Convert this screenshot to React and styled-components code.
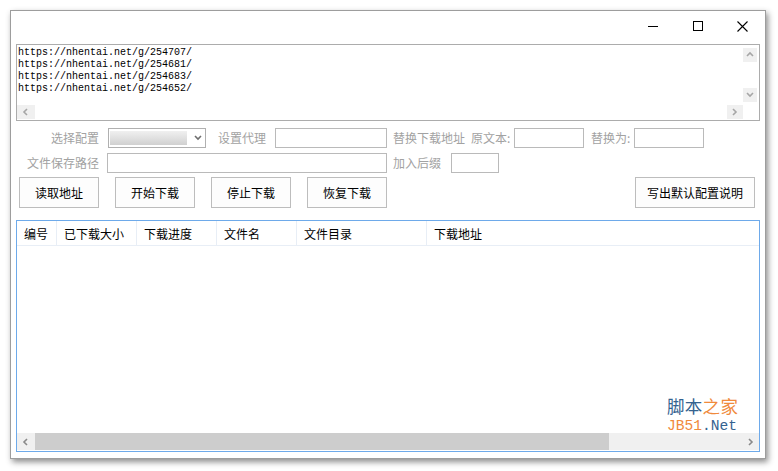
import React from 'react';
import styled, { createGlobalStyle } from 'styled-components';

const GlobalStyle = createGlobalStyle`
  html, body {
    margin: 0;
    padding: 0;
    background: #ffffff;
  }
  body {
    width: 778px;
    height: 471px;
    overflow: hidden;
    font-family: "Noto Sans CJK SC", "Noto Sans", sans-serif;
  }
`;

const Page = styled.div`
  box-sizing: border-box;
  width: 778px;
  height: 471px;
  padding: 10px 0 0 10px;
`;

const Window = styled.div`
  box-sizing: border-box;
  width: 756px;
  height: 449px;
  border: 1px solid #9d9d9d;
  background: #ffffff;
  display: flex;
  flex-direction: column;
  box-shadow: 2px 3px 6px rgba(0, 0, 0, 0.45);
`;

const TitleBar = styled.div`
  height: 33px;
  display: flex;
  justify-content: flex-end;
  align-items: flex-start;
`;

const CaptionButton = styled.div`
  width: 45px;
  height: 30px;
  display: flex;
  align-items: center;
  justify-content: center;
`;

const Content = styled.div`
  flex: 1;
  display: flex;
  flex-direction: column;
  padding: 0 5px 6px 5px;
  min-height: 0;
`;

const UrlBox = styled.div`
  box-sizing: border-box;
  height: 77px;
  border: 1px solid #acacac;
  display: grid;
  grid-template-columns: 1fr 16px;
  grid-template-rows: 1fr 16px;
`;

const UrlText = styled.div`
  padding: 2px 0 0 1px;
  font-family: "Liberation Mono", "DejaVu Sans Mono", monospace;
  font-size: 10px;
  line-height: 12px;
  color: #000;
  white-space: pre;
`;

const VScroll = styled.div`
  display: flex;
  flex-direction: column;
  justify-content: space-between;
  align-items: flex-start;
  padding: 3px 0 2px 0;
`;

const HScrollSmall = styled.div`
  display: flex;
  justify-content: space-between;
  align-items: flex-start;
  padding: 1px 0 0 0;
`;

const ScrollBtn = styled.div`
  width: ${(p) => p.$w}px;
  height: ${(p) => p.$h}px;
  background: #f0f0f0;
  display: flex;
  align-items: center;
  justify-content: center;
`;

const FormRow = styled.div`
  display: flex;
  align-items: center;
  height: ${(p) => p.$h || 20}px;
  margin-top: ${(p) => p.$mt}px;
`;

const Label = styled.span`
  flex: none;
  width: ${(p) => (p.$w ? `${p.$w}px` : 'auto')};
  margin-left: ${(p) => p.$ml || 0}px;
  text-align: ${(p) => p.$align || 'left'};
  font-size: 12px;
  line-height: 20px;
  color: #a2a2a2;
  white-space: nowrap;
`;

const TextBox = styled.input`
  flex: none;
  box-sizing: border-box;
  width: ${(p) => p.$w}px;
  height: 20px;
  margin: 0 0 0 ${(p) => p.$ml || 0}px;
  padding: 0 3px;
  border: 1px solid #bababa;
  background: #fff;
  outline: none;
  font-size: 12px;
`;

const Select = styled.div`
  flex: none;
  box-sizing: border-box;
  width: 98px;
  height: 20px;
  margin-left: 9px;
  border: 1px solid #b0b0b0;
  display: flex;
  align-items: center;
  padding-left: 1px;
`;

const SelectValue = styled.div`
  width: 77px;
  height: 14px;
  background: linear-gradient(#f0f0f0, #e2e2e2 45%, #d0d0d0);
`;

const SelectArrow = styled.div`
  flex: 1;
  display: flex;
  justify-content: center;
  padding-left: 3px;
`;

const Button = styled.button`
  flex: none;
  box-sizing: border-box;
  width: ${(p) => p.$w || 80}px;
  height: 31px;
  margin: 0 ${(p) => p.$mr || 0}px 0 ${(p) => (p.$auto ? 'auto' : `${p.$ml || 0}px`)};
  padding: 0;
  border: 1px solid #bdbdbd;
  background: #fdfdfd;
  font-family: "Noto Sans CJK SC", sans-serif;
  font-size: 12px;
  color: #000;
`;

const ListView = styled.div`
  position: relative;
  flex: 1;
  margin-top: 12px;
  border: 1px solid #6eaaea;
  display: flex;
  flex-direction: column;
`;

const Header = styled.div`
  display: flex;
  height: 24px;
  border-bottom: 1px solid #e8eef6;
`;

const HeaderCell = styled.div`
  box-sizing: border-box;
  flex: ${(p) => (p.$w ? 'none' : 1)};
  width: ${(p) => (p.$w ? `${p.$w}px` : 'auto')};
  padding-left: 7px;
  border-right: ${(p) => (p.$w ? '1px solid #e8eef6' : 'none')};
  font-size: 12px;
  line-height: 25px;
  color: #000;
`;

const ListBody = styled.div`
  flex: 1;
`;

const HScroll = styled.div`
  display: flex;
  height: 17px;
  margin-bottom: 1px;
  background: #f0f0f0;
`;

const Thumb = styled.div`
  width: 574px;
  background: #cdcdcd;
`;

const Track = styled.div`
  flex: 1;
  display: flex;
  justify-content: flex-end;
`;

const Watermark = styled.div`
  position: absolute;
  left: 650px;
  top: 175px;
  display: flex;
  flex-direction: column;
`;

const MarkCn = styled.div`
  font-size: 17.5px;
  line-height: 20px;
  letter-spacing: 0.3px;
`;

const MarkEn = styled.div`
  font-family: "Liberation Mono", "DejaVu Sans Mono", monospace;
  font-size: 14.6px;
  line-height: 16px;
  margin-top: 2px;
`;

const Tone = styled.span`
  color: ${(p) => (p.$orange ? '#f08a3c' : '#34628f')};
`;

const Chevron = ({ dir, color = '#a6a6a6' }) => {
  const pts = {
    up: '1,5 4,2 7,5',
    down: '1,2 4,5 7,2',
    left: '5,1 2,4 5,7',
    right: '2,1 5,4 2,7',
  }[dir];
  return (
    <svg width="8" height="8" viewBox="0 0 8 8">
      <polyline points={pts} fill="none" stroke={color} strokeWidth="1.6" />
    </svg>
  );
};

const urls = [
  'https://nhentai.net/g/254707/',
  'https://nhentai.net/g/254681/',
  'https://nhentai.net/g/254683/',
  'https://nhentai.net/g/254652/',
];

const columns = [
  { name: '编号', w: 40 },
  { name: '已下载大小', w: 80 },
  { name: '下载进度', w: 80 },
  { name: '文件名', w: 80 },
  { name: '文件目录', w: 130 },
  { name: '下载地址' },
];

export default function App() {
  return (
    <Page>
      <GlobalStyle />
      <Window>
        <TitleBar>
          <CaptionButton>
            <svg width="10" height="10" viewBox="0 0 10 10">
              <line x1="0" y1="5.5" x2="10" y2="5.5" stroke="#000" strokeWidth="1" />
            </svg>
          </CaptionButton>
          <CaptionButton>
            <svg width="10" height="10" viewBox="0 0 10 10">
              <rect x="0.5" y="0.5" width="9" height="9" fill="none" stroke="#000" strokeWidth="1" />
            </svg>
          </CaptionButton>
          <CaptionButton>
            <svg width="11" height="11" viewBox="0 0 11 11">
              <path d="M0.5 0.5 L10.5 10.5 M10.5 0.5 L0.5 10.5" stroke="#000" strokeWidth="1.1" />
            </svg>
          </CaptionButton>
        </TitleBar>

        <Content>
          <UrlBox>
            <UrlText>{urls.join('\n')}</UrlText>
            <VScroll>
              <ScrollBtn $w={14} $h={14}>
                <Chevron dir="up" />
              </ScrollBtn>
              <ScrollBtn $w={14} $h={14}>
                <Chevron dir="down" />
              </ScrollBtn>
            </VScroll>
            <HScrollSmall>
              <ScrollBtn $w={18} $h={14}>
                <Chevron dir="left" />
              </ScrollBtn>
              <ScrollBtn $w={16} $h={14}>
                <Chevron dir="right" />
              </ScrollBtn>
            </HScrollSmall>
            <div />
          </UrlBox>

          <FormRow $mt={7}>
            <Label $w={83} $align="right">选择配置</Label>
            <Select>
              <SelectValue />
              <SelectArrow>
                <Chevron dir="down" color="#6e6e6e" />
              </SelectArrow>
            </Select>
            <Label $ml={12}>设置代理</Label>
            <TextBox $ml={9} $w={112} readOnly />
            <Label $ml={6}>替换下载地址</Label>
            <Label $ml={6} $w={43}>原文本:</Label>
            <TextBox $w={70} readOnly />
            <Label $ml={7} $w={43}>替换为:</Label>
            <TextBox $w={70} readOnly />
          </FormRow>

          <FormRow $mt={5}>
            <Label $w={83} $align="right">文件保存路径</Label>
            <TextBox $ml={8} $w={280} readOnly />
            <Label $ml={6}>加入后缀</Label>
            <TextBox $ml={10} $w={48} readOnly />
          </FormRow>

          <FormRow $mt={4} $h={31}>
            <Button $ml={3}>读取地址</Button>
            <Button $ml={16}>开始下载</Button>
            <Button $ml={16}>停止下载</Button>
            <Button $ml={16}>恢复下载</Button>
            <Button $auto $w={120} $mr={5}>写出默认配置说明</Button>
          </FormRow>

          <ListView>
            <Header>
              {columns.map((c) => (
                <HeaderCell key={c.name} $w={c.w}>
                  {c.name}
                </HeaderCell>
              ))}
            </Header>
            <ListBody />
            <HScroll>
              <ScrollBtn $w={18} $h={17}>
                <Chevron dir="left" color="#8a8a8a" />
              </ScrollBtn>
              <Thumb />
              <Track>
                <ScrollBtn $w={17} $h={17}>
                  <Chevron dir="right" color="#8a8a8a" />
                </ScrollBtn>
              </Track>
            </HScroll>
            <Watermark>
              <MarkCn>
                <Tone>脚本</Tone>
                <Tone $orange>之家</Tone>
              </MarkCn>
              <MarkEn>
                <Tone $orange>JB51</Tone>
                <Tone>.Net</Tone>
              </MarkEn>
            </Watermark>
          </ListView>
        </Content>
      </Window>
    </Page>
  );
}
